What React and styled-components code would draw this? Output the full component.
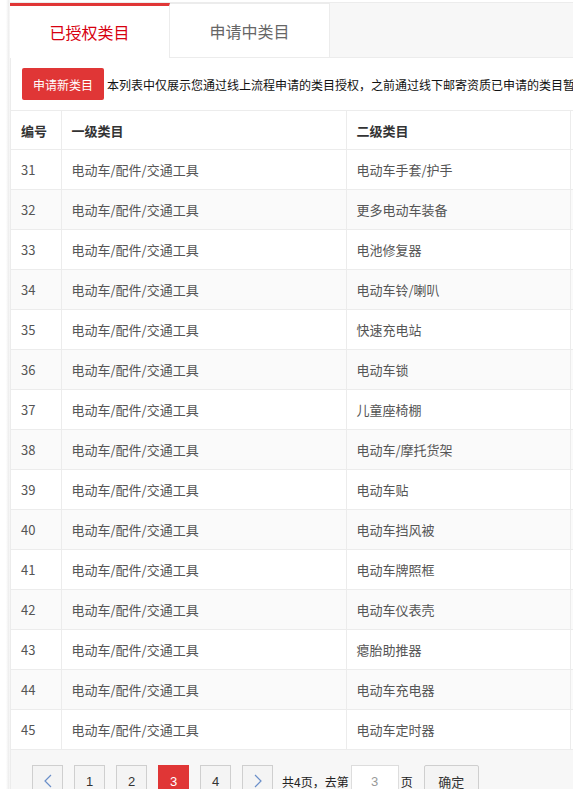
import styled, { createGlobalStyle } from "styled-components";

const GlobalStyle = createGlobalStyle`
  body {
    margin: 0;
    background: #fff;
    font-family: "Microsoft YaHei", "Noto Sans CJK SC", sans-serif;
    overflow: hidden;
  }
`;

const Page = styled.div`
  width: 573px;
  height: 789px;
  overflow: hidden;
  padding: 2px 0 0 10px;
  box-sizing: border-box;
  background: linear-gradient(to right, #fff 0, #fff 6px, #ececec 9px, #fff 10px);
`;

const TabBar = styled.div`
  display: flex;
  height: 55px;
  background: #f7f7f7;
  border-top: 1px solid #ececec;
  box-sizing: border-box;
`;

const Tab = styled.div`
  width: 160px;
  display: flex;
  align-items: center;
  justify-content: center;
  font-size: 16px;
  box-sizing: border-box;
  background: #fff;
  color: ${(p) => (p.active ? "#d7000f" : "#666")};
  border-top: ${(p) => (p.active ? "3px solid #e03636" : "1px solid #ececec")};
  border-right: 1px solid #ececec;
  height: ${(p) => (p.active ? "55px" : "54px")};
  margin-bottom: ${(p) => (p.active ? "-1px" : "0")};
  position: relative;
  z-index: 1;
`;

const Panel = styled.div`
  background: #fff;
  border-top: 1px solid #ececec;
  border-left: 1px solid #ececec;
  width: 700px;
`;

const Toolbar = styled.div`
  display: flex;
  align-items: center;
  padding: 10px 11px;
  white-space: nowrap;
`;

const RedButton = styled.button`
  height: 32px;
  padding: 0 11px;
  border: none;
  border-radius: 2px;
  background: #e03636;
  color: #fff;
  font-family: inherit;
  font-size: 12px;
  margin-right: 3px;
`;

const Notice = styled.span`
  font-size: 12px;
  color: #111;
`;

const Table = styled.table`
  border-collapse: collapse;
  table-layout: fixed;
  width: 760px;
`;

const Th = styled.th`
  height: 38px;
  padding: 0 10px;
  text-align: left;
  font-size: 13px;
  font-weight: bold;
  color: #333;
  border: 1px solid #ececec;
  border-left: none;
`;

const Row = styled.tr`
  background: ${(p) => (p.striped ? "#fafafa" : "#fff")};
`;

const Td = styled.td`
  height: 39px;
  padding: 0 10px;
  font-size: 13px;
  color: #555;
  border: 1px solid #ececec;
  border-left: none;
`;

const Pager = styled.div`
  display: flex;
  align-items: flex-start;
  gap: 11px;
  background: #f7f7f7;
  padding: 15px 0 0 21px;
  height: 40px;
`;

const PageBtn = styled.div`
  width: 31px;
  height: 32px;
  box-sizing: border-box;
  display: flex;
  align-items: center;
  justify-content: center;
  font-size: 13px;
  font-family: "Liberation Sans", sans-serif;
  color: ${(p) => (p.active ? "#fff" : "#333")};
  background: ${(p) => (p.active ? "#e03636" : "#f4f4f4")};
  border: 1px solid ${(p) => (p.active ? "#e03636" : "#cfcfcf")};
`;

const Jump = styled.div`
  display: flex;
  align-items: center;
  height: 32px;
  font-size: 12px;
  color: #222;
  margin-left: -2px;
`;

const PageInput = styled.div`
  width: 48px;
  height: 32px;
  box-sizing: border-box;
  border: 1px solid #ddd;
  background: #fff;
  color: #999;
  display: flex;
  align-items: center;
  justify-content: center;
  margin: 0 2px;
  font-size: 13px;
  font-family: "Liberation Sans", sans-serif;
`;

const OkBtn = styled.div`
  width: 55px;
  height: 32px;
  box-sizing: border-box;
  border: 1px solid #cfcfcf;
  border-radius: 2px;
  background: #f4f4f4;
  display: flex;
  align-items: center;
  justify-content: center;
  font-size: 13px;
  color: #333;
  margin-left: 11px;
`;

const subs = [
  "电动车手套/护手",
  "更多电动车装备",
  "电池修复器",
  "电动车铃/喇叭",
  "快速充电站",
  "电动车锁",
  "儿童座椅棚",
  "电动车/摩托货架",
  "电动车贴",
  "电动车挡风被",
  "电动车牌照框",
  "电动车仪表壳",
  "瘪胎助推器",
  "电动车充电器",
  "电动车定时器",
];

const Chevron = ({ left }) => (
  <svg width="8" height="14" viewBox="0 0 8 14">
    <path
      d={left ? "M7 1 L1 7 L7 13" : "M1 1 L7 7 L1 13"}
      fill="none"
      stroke="#6a8fc9"
      strokeWidth="1.2"
    />
  </svg>
);

export default function App() {
  return (
    <Page>
      <GlobalStyle />
      <TabBar>
        <Tab active>已授权类目</Tab>
        <Tab>申请中类目</Tab>
      </TabBar>
      <Panel>
        <Toolbar>
          <RedButton>申请新类目</RedButton>
          <Notice>
            本列表中仅展示您通过线上流程申请的类目授权，之前通过线下邮寄资质已申请的类目暂不展示
          </Notice>
        </Toolbar>
        <Table>
          <colgroup>
            <col style={{ width: 50 }} />
            <col style={{ width: 285 }} />
            <col style={{ width: 224 }} />
            <col />
          </colgroup>
          <thead>
            <tr>
              <Th>编号</Th>
              <Th>一级类目</Th>
              <Th>二级类目</Th>
              <Th>状态</Th>
            </tr>
          </thead>
          <tbody>
            {subs.map((s, i) => (
              <Row key={i} striped={i % 2 === 1}>
                <Td>{31 + i}</Td>
                <Td>电动车/配件/交通工具</Td>
                <Td>{s}</Td>
                <Td>已授权</Td>
              </Row>
            ))}
          </tbody>
        </Table>
        <Pager>
          <PageBtn>
            <Chevron left />
          </PageBtn>
          <PageBtn>1</PageBtn>
          <PageBtn>2</PageBtn>
          <PageBtn active>3</PageBtn>
          <PageBtn>4</PageBtn>
          <PageBtn>
            <Chevron />
          </PageBtn>
          <Jump>
            共4页，去第
            <PageInput>3</PageInput>页
            <OkBtn>确定</OkBtn>
          </Jump>
        </Pager>
      </Panel>
    </Page>
  );
}
